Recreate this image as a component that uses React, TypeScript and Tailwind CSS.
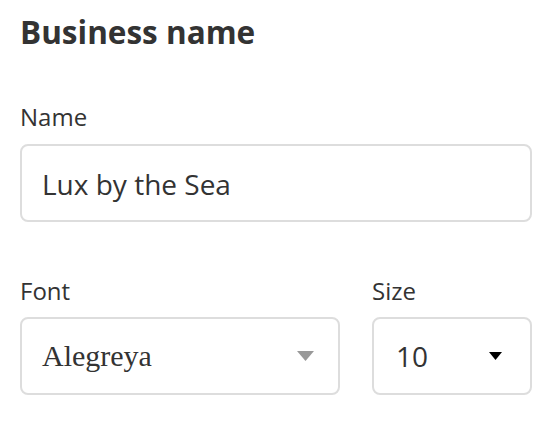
import React from "react";

export default function App() {
  return (
    <div className="w-[556px] h-[422px] bg-white px-5 pt-4 font-['Open_Sans',sans-serif] text-[#333333]">
      <h1 className="text-[31.5px] font-bold leading-none">Business name</h1>

      <div className="mt-[57px] text-[24px] leading-none">Name</div>
      <div className="mt-[15px] flex h-[78px] w-[512px] items-center rounded-lg border-2 border-[#dddddd] px-5 pt-0.5 text-[28px] leading-none">
        Lux by the Sea
      </div>

      <div className="mt-[57px] flex gap-8">
        <div className="flex w-[320px] flex-col">
          <div className="text-[24px] leading-none">Font</div>
          <div className="mt-[14px] flex h-[78px] items-center justify-between rounded-lg border-2 border-[#dddddd] pl-5 pr-6">
            <span className="font-['Liberation_Serif',serif] text-[30px] leading-none">Alegreya</span>
            <svg width="17" height="10" viewBox="0 0 17 10">
              <polygon points="0,0 17,0 8.5,10" fill="#999999" />
            </svg>
          </div>
        </div>
        <div className="flex w-[160px] flex-col">
          <div className="text-[24px] leading-none">Size</div>
          <div className="mt-[14px] flex h-[78px] items-center justify-between rounded-lg border-2 border-[#dddddd] pl-[22px] pr-7">
            <span className="text-[28px] leading-none">10</span>
            <svg width="13" height="8" viewBox="0 0 13 8">
              <polygon points="0,0 13,0 6.5,8" fill="#000000" />
            </svg>
          </div>
        </div>
      </div>
    </div>
  );
}
